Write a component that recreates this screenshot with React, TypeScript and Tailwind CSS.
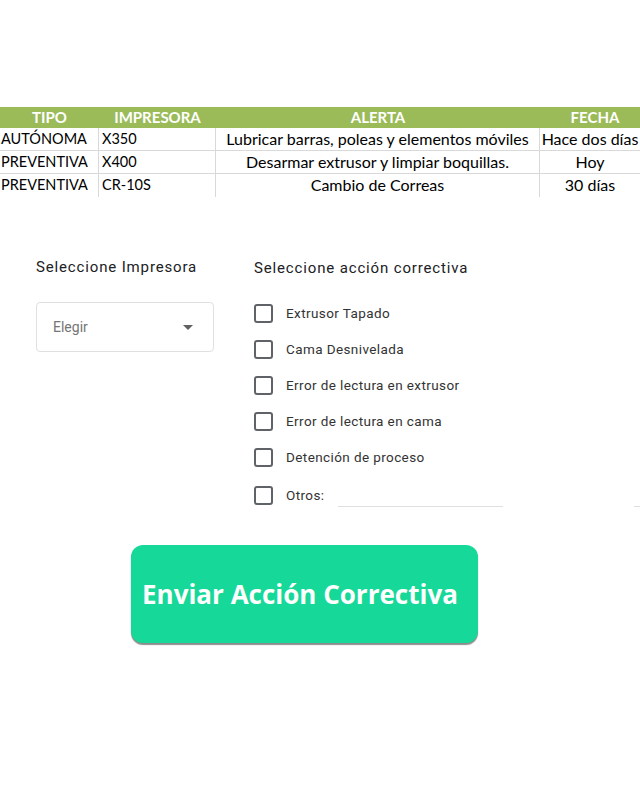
import React from "react";

const rows = [
  ["AUTÓNOMA", "X350", "Lubricar barras, poleas y elementos móviles", "Hace dos días"],
  ["PREVENTIVA", "X400", "Desarmar extrusor y limpiar boquillas.", "Hoy"],
  ["PREVENTIVA", "CR-10S", "Cambio de Correas", "30 días"],
];

const options = [
  "Extrusor Tapado",
  "Cama Desnivelada",
  "Error de lectura en extrusor",
  "Error de lectura en cama",
  "Detención de proceso",
];

function Box() {
  return <div className="w-[19px] h-[19px] rounded-[3px] border-2 border-[#5f6368] shrink-0" />;
}

export default function App() {
  return (
    <div className="w-[640px] h-[801px] bg-white overflow-hidden">
      <div className="pt-[107px] w-[640px] overflow-hidden">
        <div className="w-[660px] font-['Lato',sans-serif] text-[16px] text-black">
          <div className="flex h-[21px] bg-[#9bbb59] text-white font-bold text-[15px] leading-[21px]">
            <div className="w-[99px] text-center">TIPO</div>
            <div className="w-[117px] text-center">IMPRESORA</div>
            <div className="w-[324px] text-center">ALERTA</div>
            <div className="w-[110px] text-center">FECHA</div>
          </div>
          {rows.map((r, i) => (
            <div
              key={i}
              className={`flex h-[23px] leading-[22px] ${i < rows.length - 1 ? "border-b border-[#d9d9d9]" : ""}`}
            >
              <div className="w-[99px] pl-[1px] text-[14.5px] border-r border-[#d9d9d9] whitespace-nowrap overflow-hidden">{r[0]}</div>
              <div className="w-[117px] pl-[3px] text-[14.5px] border-r border-[#d9d9d9] whitespace-nowrap">{r[1]}</div>
              <div className="w-[324px] text-center border-r border-[#d9d9d9] whitespace-nowrap">{r[2]}</div>
              <div className="w-[110px] text-center whitespace-nowrap pr-[10px]">{r[3]}</div>
            </div>
          ))}
        </div>
      </div>

      <div className="flex mt-[60px] font-['Roboto',sans-serif]">
        <div className="ml-[36px] w-[178px]">
          <div className="text-[15px] text-[#202124] tracking-[0.85px] leading-[20px] h-[20px] whitespace-nowrap">Seleccione Impresora</div>
          <div className="mt-[25px] h-[50px] border border-[#e0e0e0] rounded-[4px] flex items-center pl-[16px] pr-[20px] justify-between">
            <span className="text-[14px] text-[#757575]">Elegir</span>
            <svg width="10" height="5" viewBox="0 0 10 5">
              <path d="M0 0 L10 0 L5 5 Z" fill="#616161" />
            </svg>
          </div>
        </div>
        <div className="ml-[40px] flex-1">
          <div className="text-[15px] text-[#202124] tracking-[0.85px] leading-[20px] h-[20px] mt-[1px] whitespace-nowrap">Seleccione acción correctiva</div>
          <div className="mt-[26px] flex flex-col gap-[17px]">
            {options.map((o) => (
              <div key={o} className="flex items-center h-[19px]">
                <Box />
                <span className="ml-[13px] text-[13.5px] tracking-[0.4px] text-[#333]">{o}</span>
              </div>
            ))}
            <div className="flex items-center h-[19px] mt-[2px]">
              <Box />
              <span className="ml-[13px] text-[13.5px] tracking-[0.4px] text-[#333]">Otros:</span>
              <div className="ml-[14px] w-[165px] h-[1px] bg-[#e0e0e0] mt-[22px]" />
              <div className="ml-auto w-[6px] h-[1px] bg-[#e0e0e0] mt-[22px]" />
            </div>
          </div>
        </div>
      </div>

      <div className="mt-[40px] ml-[131px] w-[347px] h-[98px] rounded-[12px] bg-[#16d898] shadow-[0_2px_1px_rgba(0,0,0,0.45)] flex items-center pl-[11px]">
        <span className="font-['Open_Sans',sans-serif] font-bold text-[26px] text-white">Enviar Acción Correctiva</span>
      </div>
    </div>
  );
}
